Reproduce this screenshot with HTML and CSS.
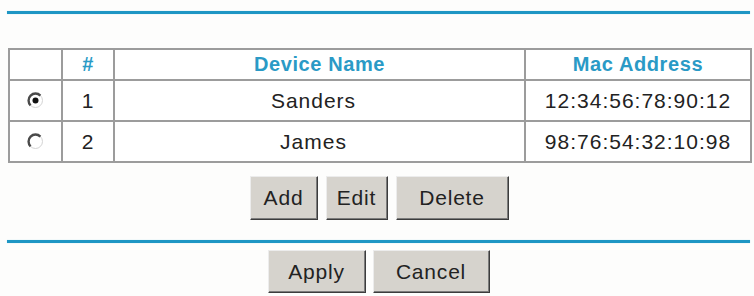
FILE: index.html
```html
<!DOCTYPE html>
<html>
<head>
<meta charset="utf-8">
<link rel="stylesheet" href="styles.css">
</head>
<body>
<div class="wrap">
  <div class="rule"></div>
  <table class="devices">
    <colgroup>
      <col class="c-sel"><col class="c-num"><col class="c-name"><col class="c-mac">
    </colgroup>
    <tr class="head">
      <th></th><th>#</th><th>Device Name</th><th>Mac Address</th>
    </tr>
    <tr class="row">
      <td><svg class="radio" width="17" height="17" viewBox="0 0 17 17"><circle cx="8.5" cy="8.5" r="7" fill="#fff" stroke="#d4d4d4" stroke-width="1"/><path d="M13.4 3.6A6.9 6.9 0 0 0 3.6 13.4" fill="none" stroke="#4a4a4a" stroke-width="2.4"/><circle cx="8.5" cy="8.5" r="3" fill="#111"/></svg></td>
      <td>1</td><td class="name">Sanders</td><td>12:34:56:78:90:12</td>
    </tr>
    <tr class="row">
      <td><svg class="radio" width="17" height="17" viewBox="0 0 17 17"><circle cx="8.5" cy="8.5" r="7" fill="#fff" stroke="#d4d4d4" stroke-width="1"/><path d="M13.4 3.6A6.9 6.9 0 0 0 3.6 13.4" fill="none" stroke="#4a4a4a" stroke-width="2.4"/></svg></td>
      <td>2</td><td class="name">James</td><td>98:76:54:32:10:98</td>
    </tr>
  </table>
  <div class="btns first">
    <button class="btn b-add">Add</button>
    <button class="btn b-edit">Edit</button>
    <button class="btn b-del">Delete</button>
  </div>
  <div class="rule second"></div>
  <div class="btns last">
    <button class="btn b-apply">Apply</button>
    <button class="btn b-cancel">Cancel</button>
  </div>
</div>
</body>
</html>
```
FILE: styles.css
```css
html, body {
  margin: 0;
  padding: 0;
  background: #fdfdfc;
}
body {
  font-family: "Liberation Sans", Arial, sans-serif;
  color: #222;
}
.wrap {
  width: 743px;
  margin-left: 7px;
  padding-top: 11px;
}
.rule {
  height: 3px;
  background: #1e96c4;
  box-shadow: 0 0 1px #8fd0e8;
}
.devices {
  margin-top: 34px;
  margin-left: 1px;
  width: 742px;
  border: 1px solid #9c9c9c;
  border-collapse: separate;
  border-spacing: 0;
  table-layout: fixed;
  background: #fff;
}
.c-sel { width: 53px; }
.c-num { width: 52px; }
.c-name { width: 411px; }
.c-mac { width: 226px; }
.devices th, .devices td {
  border: 1px solid #9c9c9c;
  padding: 0;
  text-align: center;
  box-sizing: border-box;
}
.head th {
  height: 31px;
  font-size: 20px;
  font-weight: bold;
  color: #2a9ac6;
  letter-spacing: 0.6px;
}
.row td {
  height: 41px;
  font-size: 21px;
  letter-spacing: 1px;
}
.row td.name {
  padding-right: 12px;
}
.radio {
  display: block;
  margin: 0 auto;
}
.btns {
  display: flex;
  justify-content: center;
  gap: 8px;
}
.btns.first {
  margin-top: 13px;
  margin-left: 1px;
}
.rule.second {
  margin-top: 20px;
}
.btns.last {
  margin-top: 7px;
  gap: 7px;
}
.btn {
  font-family: "Liberation Sans", Arial, sans-serif;
  font-size: 21px;
  letter-spacing: 0.8px;
  color: #222;
  background: #d6d3cd;
  border: 1px solid;
  border-color: #ececec #3c3c3c #3c3c3c #ececec;
  box-shadow: inset -1px -1px 0 #7c7c7c;
  padding: 0;
  height: 44px;
  margin: 0;
}
.b-add { width: 68px; }
.b-edit { width: 62px; }
.b-del { width: 113px; }
.b-apply { width: 98px; height: 43px; }
.b-cancel { width: 117px; height: 43px; }
```
